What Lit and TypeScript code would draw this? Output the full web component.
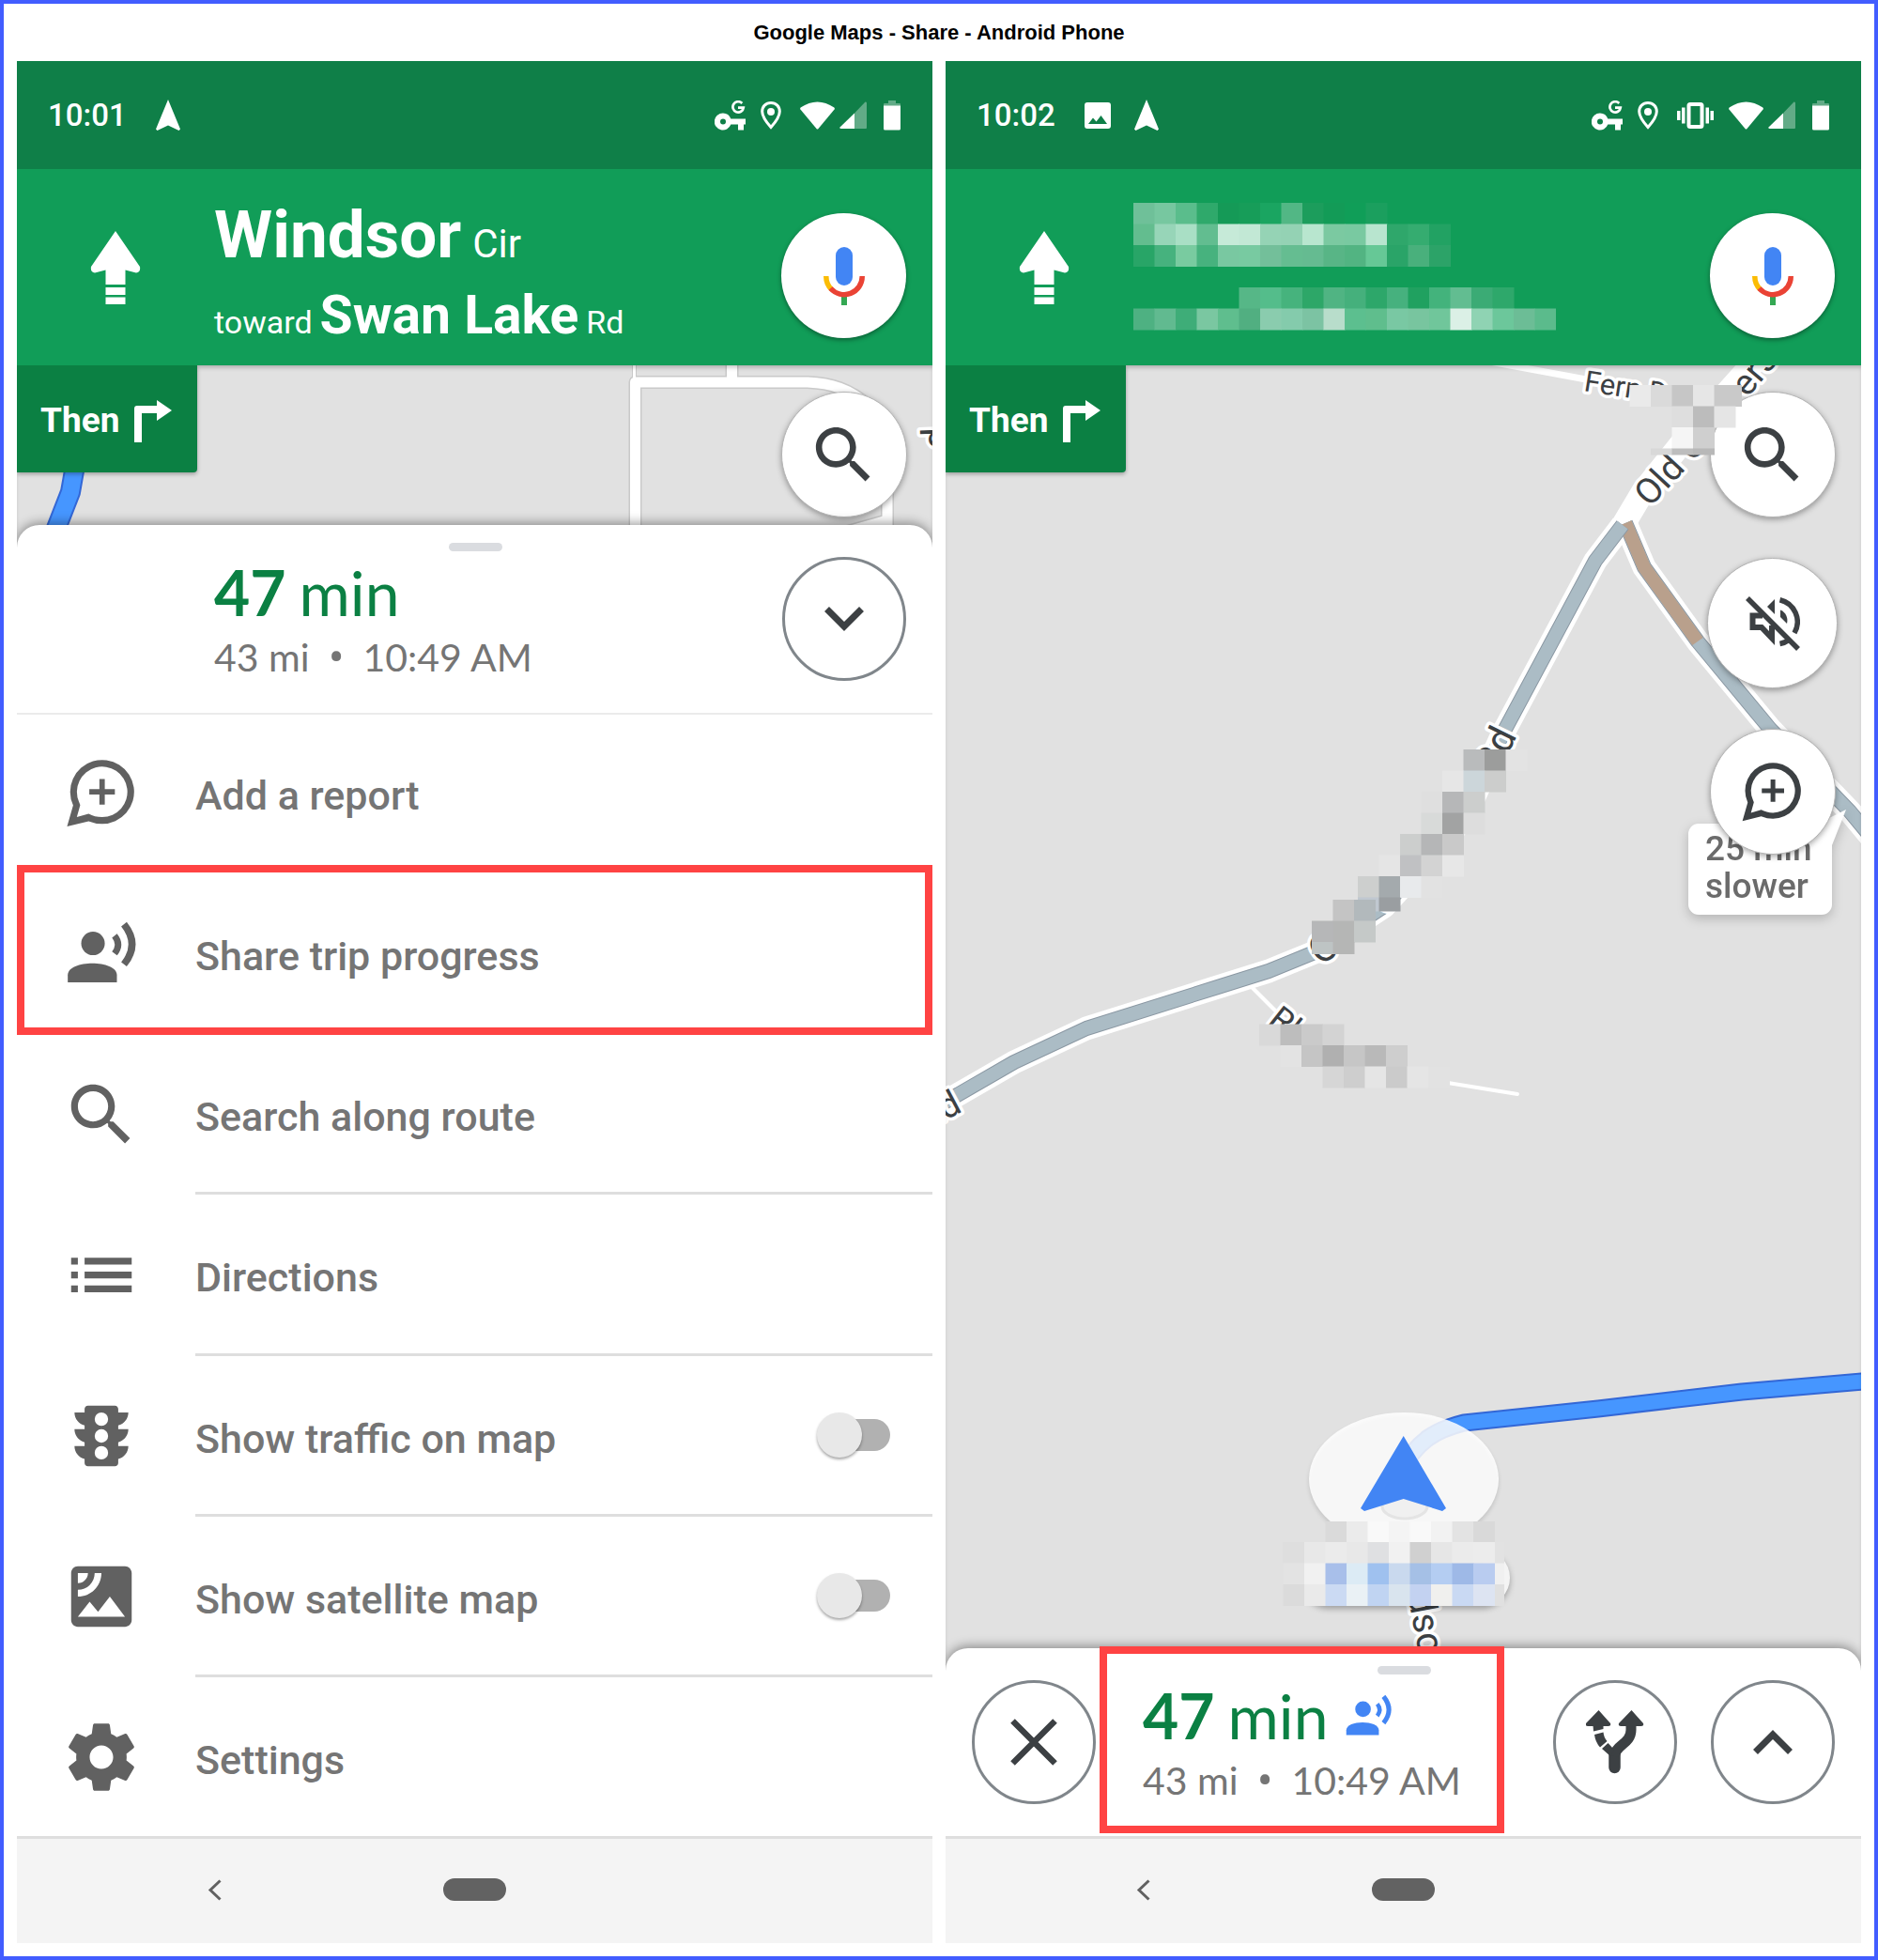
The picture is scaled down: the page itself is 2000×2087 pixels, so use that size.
import { LitElement, html, css, svg, nothing } from "lit";
import { customElement, property } from "lit/decorators.js";

/* ---------- icons ---------- */

const shareShape = svg`
  <circle cx="9.5" cy="8.8" r="3.5"></circle>
  <path d="M2 20.4V18.2C2 15.9 5.6 14.7 9.3 14.7S16.6 15.9 16.6 18.2V20.4Z"></path>
  <path d="M15.9 6.5Q18 9.1 15.9 11.8" fill="none" stroke="currentColor" stroke-width="1.9"></path>
  <path d="M18.7 3.1Q23.5 9.1 18.7 15" fill="none" stroke="currentColor" stroke-width="2.1"></path>`;

const reportShape = svg`<g transform="translate(0 -.5)">
  <path fill-rule="evenodd" d="M1.8 22.3L3.6 16A9.5 9.5 0 1 1 12.2 21.5Q10.2 21.5 8.2 20.7ZM4.7 19.5L8.2 18.5Q10 19.5 12.2 19.5A7.5 7.5 0 1 0 5.3 14.9L5.7 15.9Z"></path>
  <path d="M11.4 8.2h1.6v3h3v1.6h-3v3h-1.6v-3h-3v-1.6h3z"></path></g>`;

const searchShape = svg`<path d="M15.5 14h-.79l-.28-.27C15.41 12.59 16 11.11 16 9.5 16 5.91 13.09 3 9.5 3S3 5.91 3 9.5 5.91 16 9.5 16c1.61 0 3.09-.59 4.23-1.57l.27.28v.79l5 4.99L20.49 19l-4.99-5zm-6 0C7.01 14 5 11.99 5 9.5S7.01 5 9.5 5 14 7.01 14 9.5 11.99 14 9.5 14z"></path>`;

const listShape = svg`<path d="M3 6.8h2v2H3zM3 10.9h2v2H3zM3 15h2v2H3zM7 6.8h14v2H7zM7 10.9h14v2H7zM7 15h14v2H7z"></path>`;

const trafficShape = svg`<path fill-rule="evenodd" d="M20 10h-3V8.86c1.72-.45 3-2 3-3.86h-3V4c0-.55-.45-1-1-1H8c-.55 0-1 .45-1 1v1H4c0 1.86 1.28 3.41 3 3.86V10H4c0 1.86 1.28 3.41 3 3.86V15H4c0 1.86 1.28 3.41 3 3.86V20c0 .55.45 1 1 1h8c.55 0 1-.45 1-1v-1.14c1.72-.45 3-2 3-3.86h-3v-1.14c1.72-.45 3-2 3-3.86zM12 19a2 2 0 1 1 0-4 2 2 0 0 1 0 4zm0-5a2 2 0 1 1 0-4 2 2 0 0 1 0 4zm0-5a2 2 0 1 1 0-4 2 2 0 0 1 0 4z"></path>`;

const satelliteShape = svg`<path d="M19 3H5c-1.1 0-2 .9-2 2v14c0 1.1.9 2 2 2h14c1.1 0 2-.9 2-2V5c0-1.1-.9-2-2-2zM5 4.99h3C8 6.65 6.66 8 5 8V4.99zM5 12v-2c2.76 0 5-2.25 5-5.01h2C12 8.86 8.87 12 5 12zm0 6l3.5-4.5 2.5 3.01L14.5 12l4.5 6H5z"></path>`;

const gearShape = svg`<path d="M19.43 12.98c.04-.32.07-.64.07-.98s-.03-.66-.07-.98l2.11-1.65c.19-.15.24-.42.12-.64l-2-3.46c-.12-.22-.39-.3-.61-.22l-2.49 1c-.52-.4-1.08-.73-1.69-.98l-.38-2.65C14.46 2.18 14.25 2 14 2h-4c-.25 0-.46.18-.49.42l-.38 2.65c-.61.25-1.17.59-1.69.98l-2.49-1c-.23-.09-.49 0-.61.22l-2 3.46c-.13.22-.07.49.12.64l2.11 1.65c-.04.32-.07.65-.07.98s.03.66.07.98l-2.11 1.65c-.19.15-.24.42-.12.64l2 3.46c.12.22.39.3.61.22l2.49-1c.52.4 1.08.73 1.69.98l.38 2.65c.03.24.24.42.49.42h4c.25 0 .46-.18.49-.42l.38-2.65c.61-.25 1.17-.59 1.69-.98l2.49 1c.23.09.49 0 .61-.22l2-3.46c.12-.22.07-.49-.12-.64l-2.11-1.65zM12 15.5c-1.93 0-3.5-1.57-3.5-3.5s1.57-3.5 3.5-3.5 3.5 1.57 3.5 3.5-1.57 3.5-3.5 3.5z"></path>`;

const icon24 = (shape: unknown, cls: string) =>
  html`<svg class=${cls} viewBox="0 0 24 24" fill="currentColor" aria-hidden="true">${shape}</svg>`;

const micIcon = html`<svg class="mic" viewBox="0 0 44 62" aria-hidden="true">
  <rect x="13" y="0" width="18" height="41" rx="9" fill="#4285f4"></rect>
  <rect x="19" y="50" width="6" height="12" fill="#34a853"></rect>
  <path d="M2.8 31A19.2 19.2 0 0 0 8.5 45" fill="none" stroke="#fbbc05" stroke-width="5.5"></path>
  <path d="M7.5 44A19.2 19.2 0 0 0 41.2 31" fill="none" stroke="#ea4335" stroke-width="5.5"></path>
</svg>`;

const muteIcon = html`<svg class="mute" viewBox="0 0 58 60" fill="currentColor" aria-hidden="true">
  <path d="M18 21.5H7.5V34H17L28 45.5V32" fill="none" stroke="currentColor" stroke-width="6"></path>
  <path d="M23 12L31 4V20Z"></path>
  <path d="M36.5 4.7A24 24 0 0 1 52 40" fill="none" stroke="currentColor" stroke-width="5.5"></path>
  <path d="M37 15.5C43 18 45.5 24 44 30L37 23Z"></path>
  <path d="M36.5 51.5Q42 50.5 46 47.5" fill="none" stroke="currentColor" stroke-width="5.5"></path>
  <path d="M2 3L56 57" stroke="currentColor" stroke-width="5.5"></path>
</svg>`;

const straightIcon = html`<svg class="straight" viewBox="0 0 54 78" fill="#fff" aria-hidden="true">
  <path d="M27 0L53 38Q54 44 49 44.5L37.5 41.5V57H16.5V41.5L5 44.5Q0 44 1 38Z"></path>
  <path d="M16.5 60h21v8h-21zM16.5 70.5h21v7.5h-21z"></path>
</svg>`;

const turnIcon = html`<svg class="turn" viewBox="0 0 40 45" fill="#fff" aria-hidden="true">
  <path d="M0 45V9Q0 6 3 6H24V0L40 11L24 22V14H8V45Z"></path>
</svg>`;

const navArrow = html`<svg class="s-nav" viewBox="0 0 26 33" fill="#fff" aria-hidden="true">
  <path d="M13 0L26 31.5L24.5 33L13 27.5L1.5 33L0 31.5Z"></path>
</svg>`;

const photoIcon = html`<svg class="s-photo" viewBox="0 0 28 28" aria-hidden="true">
  <path fill="#fff" fill-rule="evenodd" d="M3 0H25Q28 0 28 3V25Q28 28 25 28H3Q0 28 0 25V3Q0 0 3 0ZM4 23H24L17.5 14L12.5 20.5L9 16.5Z"></path>
</svg>`;

const keyIcon = html`<svg class="s-key" viewBox="0 0 33 32" aria-hidden="true">
  <path fill="#fff" fill-rule="evenodd" d="M9 13.5A9 9 0 0 1 17.3 19.5H33V25.5H31V31.5H25V25.5H17.3A9 9 0 1 1 9 13.5ZM9 19.5A3 3 0 1 0 9 25.5A3 3 0 0 0 9 19.5Z"></path>
  <path fill="none" stroke="#fff" stroke-width="2.7" d="M29.3 3A5.7 5.7 0 1 0 30.8 7.6H25"></path>
</svg>`;

const pinIcon = html`<svg class="s-pin" viewBox="0 0 22 30" aria-hidden="true">
  <path fill="none" stroke="#fff" stroke-width="3" d="M11 1.5C5.5 1.5 1.7 5.5 1.7 10.7C1.7 17 11 27.5 11 27.5S20.3 17 20.3 10.7C20.3 5.5 16.5 1.5 11 1.5Z"></path>
  <circle cx="11" cy="11" r="4" fill="#fff"></circle>
</svg>`;

const vibrateIcon = html`<svg class="s-vib" viewBox="0 0 39 28" aria-hidden="true">
  <rect x="12.5" y="2" width="14" height="24" rx="1.5" fill="none" stroke="#fff" stroke-width="4"></rect>
  <path fill="#fff" d="M0 9h3.5v10H0zM5 5.5h3.5v17H5zM30.5 5.5H34v17h-3.5zM35.5 9H39v10h-3.5z"></path>
</svg>`;

const wifiIcon = html`<svg class="s-wifi" viewBox="0 0 37 30" fill="#fff" aria-hidden="true">
  <path d="M.6 6.5Q18.5-5.5 36.4 6.5L37 8L19.5 29Q18.5 30 17.5 29L0 8Z"></path>
</svg>`;

const signalIcon = html`<svg class="s-signal" viewBox="0 0 29 29" fill="#fff" aria-hidden="true">
  <path opacity=".35" d="M16 12.5L27.5 .5Q29 0 29 2V28Q29 29 28 29H16Z"></path>
  <path d="M16 12.5V29H1.5Q-.5 28.5 .5 27.5Z"></path>
</svg>`;

const batteryIcon = html`<svg class="s-batt" viewBox="0 0 18 32" fill="#fff" aria-hidden="true">
  <path opacity=".35" d="M5 0h8v3h4q1 0 1 1v2H0V4q0-1 1-1h4z"></path>
  <path d="M0 5.5H18V30Q18 31.5 16.5 31.5H1.5Q0 31.5 0 30Z"></path>
</svg>`;

const chevron = (up: boolean) => html`<svg class="chev" viewBox="0 0 42 26" aria-hidden="true">
  <path fill="none" stroke="currentColor" stroke-width="7" d=${up ? "M2.5 23.5L21 5L39.5 23.5" : "M2.5 2.5L21 21L39.5 2.5"}></path>
</svg>`;

const closeIcon = html`<svg class="close" viewBox="0 0 50 50" aria-hidden="true">
  <path fill="none" stroke="currentColor" stroke-width="6.5" d="M2.5 2.5L47.5 47.5M47.5 2.5L2.5 47.5"></path>
</svg>`;

const forkIcon = html`<svg class="fork" viewBox="0 0 62 68" fill="currentColor" aria-hidden="true">
  <path d="M13.5 0L26 14Q27 17 24 17H2Q-1 17 0 14ZM48.5 0L61 14Q62 17 59 17H37Q34 17 35 14Z"></path>
  <path d="M7.5 16H18.5V20L8 22.5Z"></path>
  <path d="M9 26L18.5 23.5Q19 29 22.5 33L15 39.5Q10 34 9 26Z"></path>
  <path fill="none" stroke="currentColor" stroke-width="12.5" stroke-linecap="round" d="M30.5 61V47"></path>
  <path fill="none" stroke="currentColor" stroke-width="11" d="M48 16V21C48 36 31 37 30.5 49"></path>
  <path d="M17 41L23.5 35L30 42L26 49Z"></path>
</svg>`;

/* ---------- pixelated blocks ---------- */

interface Block { x: number; y: number; h?: number; colors: (string | null)[]; }
const CELL = 22.5;

const mosaic = (blocks: Block[]) =>
  blocks.map((b) => b.colors.map((c, i) => c
    ? svg`<rect x=${b.x + i * CELL} y=${b.y} width=${CELL + 0.5} height=${b.h ?? CELL + 0.5} fill=${c}></rect>`
    : nothing));

const mapBlocks: Block[] = [
  { x: 1832, y: 410, colors: ["#c9c9c9"] },
  { x: 1735.5, y: 410, colors: ["#eaeaea", "#dadada", "#c6c6c6", "#e6e6e6", "#c9c9c9"] },
  { x: 1735.5, y: 432.5, colors: [null, null, "#dedede", "#bcbcbc", "#e5e5e5"] },
  { x: 1735.5, y: 455, colors: [null, null, "#f5f5f5", "#cfcfcf"] },
  { x: 1735.5, y: 477.5, h: 7, colors: [null, "#d8d8d8", "#bdbdbd", "#b8b8b8"] },

  { x: 1558.5, y: 798, colors: ["#b9bbbc", "#9c9d9c", "#e3e3e3"] },
  { x: 1536, y: 820.5, colors: ["#e6e6e6", "#ccd6da", "#cccdcc"] },
  { x: 1513.5, y: 843, colors: ["#dfdfdf", "#b6b7b8", "#cccecd"] },
  { x: 1513.5, y: 865.5, colors: ["#d8dad9", "#a2a3a3", "#dddddd"] },
  { x: 1491, y: 888, colors: ["#cccecd", "#b5b6b7", "#c9c9c9"] },
  { x: 1468.5, y: 910.5, colors: ["#e5e5e5", "#c0c1c3", "#d3d3d3", "#e7e7e7"] },
  { x: 1446, y: 933, colors: ["#cdcfce", "#a4aaad", "#e8eaec", "#e2e2e2"] },
  { x: 1446, y: 955.5, h: 15, colors: ["#c0c8d0", "#9a9ea1"] },
  { x: 1397, y: 958, colors: ["#e1e1e1", "#c4c4c4", "#b2b9bc"] },
  { x: 1397, y: 980.5, colors: ["#b6b7b8", "#b5b6b5", "#c5c9c8"] },
  { x: 1397, y: 1003, h: 13, colors: ["#bec4c4", "#b5b6b5"] },

  { x: 1341, y: 1090.5, colors: ["#d9d9d9", "#bdbdbd", "#cacaca", "#d3d3d3"] },
  { x: 1363.5, y: 1113, colors: ["#e3e3e3", "#c5c5c5", "#b0b0b0", "#c6c6c6", "#b9b9b9", "#cecece"] },
  { x: 1408.5, y: 1135.5, colors: ["#d6d6d6", "#cecece", "#e5e5e5", "#cbcbcb", "#e5e5e5", "#e2e2e2"] },

  { x: 1411.5, y: 1620, colors: ["#dadada", "#ebebeb", "#f9f9f9", "#f4f4f4", "#f9f9f9", "#f2f2f2", "#e3e3e3", "#d9d9d9"] },
  { x: 1579, y: 1642, colors: ["#e2e2e2"] },
  { x: 1366.5, y: 1642, colors: ["#dedede", "#e8e8e8", "#ebebeb", "#e8e8e8", "#dfe0e2", "#f1f1f1", "#d0d0d0", "#e6e6e6", "#ebebeb", "#ececec"] },
  { x: 1579, y: 1664.5, colors: ["#f0f0f0"] },
  { x: 1366.5, y: 1664.5, colors: ["#e3e3e3", "#f1f1f1", "#a8bfea", "#dcebf5", "#9fc1ef", "#c9d9ee", "#a5c0e6", "#b4cdf2", "#9eb9e7", "#b9ccf0"] },
  { x: 1579, y: 1687, colors: ["#e0e0e0"] },
  { x: 1366.5, y: 1687, colors: ["#dbdbdb", "#eaeaea", "#cbdaf3", "#eaf1f5", "#c0d4f2", "#d9e4ee", "#c3d2f1", "#f0f0ee", "#c9d9f3", "#dde4f2"] },
];

const streetBlocks: Block[] = [
  { x: 0, y: 0, colors: ["#6fc099", "#77c7a0", "#5abd8c", "#2fa96b", "#159a57", "#179d59", "#1aa561", "#52b785", "#1c9d5c", "#139b57", "#109e58", "#1b9f5e"] },
  { x: 0, y: 22.5, colors: ["#63bd8f", "#97d5b8", "#a9dfc5", "#62bd90", "#c6ead8", "#c2e8d5", "#95d3b5", "#94d2b4", "#b8e6cf", "#7bc9a1", "#79c9a1", "#b8e5cf", "#2fa76b", "#35ac70", "#22a263"] },
  { x: 0, y: 45, colors: ["#28a567", "#46b27e", "#79cba0", "#47b27e", "#79c8a1", "#78caa1", "#73bf9a", "#65bd91", "#65bb91", "#58b586", "#52b482", "#66c896", "#2aa468", "#49b07c", "#2ca368"] },
  { x: 112.5, y: 90, colors: ["#56b787", "#54bd8b", "#46b37d", "#2da768", "#50b483", "#45b07c", "#2da76a", "#46b17e", "#20a160", "#43b37c", "#62bd91", "#3bab75", "#2ea86b"] },
  { x: 0, y: 112.5, colors: ["#4eb182", "#61ba90", "#3ead78", "#7ac7a1", "#5fbe8e", "#51af81", "#8accae", "#84cbac", "#7cc3a3", "#b8ddcb", "#5cbf8f", "#5fbe8d", "#79c8a3", "#78c59f", "#70c69b", "#dbf0e6", "#8fd3b3", "#6cc79b", "#6cbd96", "#5bbb8c"] },
];

/* ---------- maps ---------- */

const mapOverview = html`<svg class="canvas" viewBox="18 389 975 194" preserveAspectRatio="xMaxYMin slice" aria-hidden="true">
  <g fill="none" stroke-linejoin="round">
    <g stroke="#c9c9c9">
      <path stroke-width="14" d="M676.5 600V407H860C885 408 905 414 925 432M779.5 380V404M945 520V600"></path>
      <path stroke-width="5" d="M675.5 380V404"></path>
      <path stroke-width="16" d="M885 572L945 555"></path>
    </g>
    <g stroke="#fff">
      <path stroke-width="11" d="M676.5 600V407H860C885 408 905 414 925 432M779.5 380V404M945 520V600"></path>
      <path stroke-width="3" d="M675.5 380V404"></path>
      <path stroke-width="13" d="M885 572L945 555"></path>
    </g>
    <path stroke="#3367d6" stroke-width="22" d="M81 490L75 524L52 583"></path>
    <path stroke="#4696ff" stroke-width="18" d="M81 490L75 524L52 583"></path>
  </g>
  <text class="street" x="1012" y="478" font-size="42" transform="rotate(-92 1012 478)">d</text>
</svg>`;

const mainRoad = "M1728 559L1699 597L1601 780L1560 870L1474 965L1400 1014L1351 1034L1300 1050L1157 1095L1080 1131L995 1180";
const sideRoad = "M1731 557L1751 604L1808 683L1885 776L1970 864L1995 894";
const blueRoute = "M1490 1570Q1502 1545 1521 1531Q1535 1521 1559 1515L1702 1500L1855 1482L1995 1470";

const mapRoute = html`<svg class="canvas" viewBox="1007 389 975 1390" preserveAspectRatio="xMidYMin slice" aria-hidden="true">
  <g fill="none" stroke-linejoin="round" stroke-linecap="butt">
    <path stroke="#fff" stroke-width="7" d="M1570 382L1700 406L1760 420"></path>
    <path stroke="#fff" stroke-width="25" d="M1728 560L1750 523L1790 473L1858 397L1875 378"></path>
    <path stroke="#fff" stroke-width="4" d="M1333 1051L1366 1084"></path>
    <path stroke="#fff" stroke-width="4" stroke-linecap="round" d="M1542 1153L1616 1165"></path>
    <g stroke="#fff" stroke-width="25"><path d=${mainRoad}></path><path d=${sideRoad}></path></g>
    <g stroke="#8b98a3" stroke-width="16"><path d=${sideRoad}></path></g>
    <path stroke="#abbcc5" stroke-width="14" d=${sideRoad}></path>
    <path stroke="#b9a08c" stroke-width="14" d="M1731 557L1751 604L1808 683"></path>
    <path stroke="#8b98a3" stroke-width="16" d=${mainRoad}></path>
    <path stroke="#abbcc5" stroke-width="14" d=${mainRoad}></path>
    <path stroke="#3367d6" stroke-width="19" d=${blueRoute}></path>
    <path stroke="#4696ff" stroke-width="15" d=${blueRoute}></path>
  </g>
  <g class="street">
    <text x="1686" y="416" font-size="31" transform="rotate(9 1686 416)">Fern D</text>
    <text x="1757" y="541" font-size="38" transform="rotate(-47 1757 541)">Old C</text>
    <text x="1861" y="424" font-size="38" transform="rotate(-50 1861 424)">ers</text>
    <text x="1616" y="783" font-size="42" text-anchor="end" transform="rotate(-64 1616 783)">Rd</text>
    <text x="1026" y="1183" font-size="38" text-anchor="end" transform="rotate(-28 1026 1183)">Rd</text>
    <text x="1406" y="1029" font-size="42" transform="rotate(-35 1406 1029)">O</text>
    <text x="1475" y="974" font-size="38" transform="rotate(-40 1475 974)">o</text>
    <text x="1349" y="1089" font-size="36" transform="rotate(38 1349 1089)">Rh</text>
    <text x="1499" y="1698" font-size="40" transform="rotate(79 1499 1698)">dsor</text>
  </g>
  <g class="callout">
    <path d="M1930 880L1966 862L1951 900Z"></path>
    <rect x="1798" y="877" width="153" height="97" rx="11"></rect>
    <text x="1816" y="916">25 min</text>
    <text x="1816" y="956">slower</text>
  </g>
  <rect class="pill" x="1385" y="1650" width="223" height="60" rx="30"></rect>
  <ellipse class="disc" cx="1495" cy="1575" rx="101" ry="71"></ellipse>
  <ellipse cx="1496" cy="1604" rx="24" ry="13" fill="#f0f0f0" stroke="#e4e4e4" stroke-width="3"></ellipse>
  <path fill="#4285f4" d="M1494.7 1529L1540 1606L1536 1609L1494.7 1596L1453 1609L1449 1606Z"></path>
</svg>`;

/* ---------- shared styles ---------- */

const base = css`
  * { box-sizing: border-box; }
  button { font: inherit; color: inherit; border: 0; margin: 0; padding: 0; background: none; cursor: pointer; }
  svg { display: block; flex: none; }
`;

/* ---------- status bar ---------- */

@customElement("status-bar")
class StatusBar extends LitElement {
  @property() time = "";
  @property({ type: Boolean }) silent = false;

  static styles = [base, css`
    :host { display: block; background: #0f7f48; }
    .bar { display: flex; align-items: center; height: 115px; padding: 0 34px 0 33px; color: #fff; }
    .time { font: 500 33px/40px Roboto, sans-serif; margin-right: 31px; }
    .right { display: flex; align-items: center; margin-left: auto; }
    .s-nav { width: 26px; height: 33px; }
    .s-photo { width: 28px; height: 28px; margin-right: 25px; }
    .s-key { width: 33px; height: 32px; margin-right: 16px; }
    .s-pin { width: 22px; height: 30px; margin-right: 20px; }
    .s-vib { width: 39px; height: 28px; margin-right: 16px; }
    .s-wifi { width: 37px; height: 30px; margin-right: 5px; }
    .s-signal { width: 29px; height: 29px; margin-right: 18px; }
    .s-batt { width: 18px; height: 32px; }
  `];

  render() {
    return html`<div class="bar">
      <span class="time">${this.time}</span>
      ${this.silent ? photoIcon : nothing}${navArrow}
      <div class="right">
        ${keyIcon}${pinIcon}${this.silent ? vibrateIcon : nothing}${wifiIcon}${signalIcon}${batteryIcon}
      </div>
    </div>`;
  }
}

/* ---------- direction header ---------- */

@customElement("direction-header")
class DirectionHeader extends LitElement {
  @property({ type: Boolean }) masked = false;

  static styles = [base, css`
    :host { display: block; background: #119d58; color: #fff; font-family: Roboto, sans-serif; }
    .head { display: grid; grid-template-columns: 210px 1fr auto; align-items: center; height: 209px; padding-right: 28px; }
    .straight { width: 54px; height: 78px; margin-left: 78px; }
    .streets { display: flex; flex-direction: column; padding-top: 16px; }
    .line { display: flex; align-items: baseline; margin: 0; white-space: nowrap; font-weight: 400; }
    .first { gap: 12px; line-height: 84px; font-size: 42px; }
    .first b { font-size: 71px; }
    .second { gap: 8px; line-height: 68px; font-size: 34px; }
    .second b { font-size: 57px; }
    .blocks { width: 450px; height: 136px; margin: -2px 0 0 -10px; }
    .voice { display: grid; place-items: center; width: 133px; height: 133px; margin-top: 18px; border-radius: 50%; background: #fff; box-shadow: 0 2px 5px rgba(0, 0, 0, .4); }
    .mic { width: 44px; height: 62px; }
  `];

  render() {
    return html`<div class="head">
      ${straightIcon}
      ${this.masked
        ? html`<svg class="blocks" viewBox="0 0 450 136" aria-hidden="true">${mosaic(streetBlocks)}</svg>`
        : html`<div class="streets">
            <h2 class="line first"><b>Windsor</b><span>Cir</span></h2>
            <p class="line second"><span>toward</span><b>Swan Lake</b><span>Rd</span></p>
          </div>`}
      <button class="voice" aria-label="Voice">${micIcon}</button>
    </div>`;
  }
}

/* ---------- map ---------- */

@customElement("nav-map")
class NavMap extends LitElement {
  @property({ type: Boolean }) full = false;

  static styles = [base, css`
    :host { display: block; position: relative; overflow: hidden; background: #e1e1e1; font-family: Roboto, sans-serif; }
    .canvas { position: absolute; inset: 0; width: 100%; height: 100%; }
    .edge { position: absolute; inset: 0; pointer-events: none; box-shadow: inset 0 4px 5px -2px rgba(0, 0, 0, .25); }
    .then { position: relative; display: inline-flex; align-items: center; gap: 16px; height: 114px; width: 192px; padding: 4px 0 0 25px;
      background: #0b8043; color: #fff; font: 700 37px/44px Roboto, sans-serif; border-radius: 0 0 4px 0; box-shadow: 0 2px 4px rgba(0, 0, 0, .3); }
    .turn { width: 40px; height: 45px; }
    .actions { position: absolute; top: 28px; right: 25px; display: flex; flex-direction: column; align-items: center; gap: 43px; width: 139px; }
    .fab { display: grid; place-items: center; width: 134px; height: 134px; border-radius: 50%; background: #fff; color: #3c4043;
      border: 1px solid #b4b4b4; box-shadow: 0 2px 6px rgba(0, 0, 0, .35); }
    .wide { width: 139px; height: 139px; }
    .glyph { width: 79px; height: 79px; }
    .report { width: 75px; height: 75px; }
    .mute { width: 58px; height: 60px; }
    .street { fill: #3c4043; stroke: #fff; stroke-width: 7px; stroke-linejoin: round; paint-order: stroke; }
    .callout { fill: #fff; filter: drop-shadow(0 4px 6px rgba(0, 0, 0, .2)); }
    .callout text { fill: #6b6b6b; font-size: 37px; font-weight: 500; }
    .pill { fill: #f4f4f4; filter: drop-shadow(0 3px 3px rgba(0, 0, 0, .3)); }
    .disc { fill: #fff; fill-opacity: .85; filter: drop-shadow(0 3px 2px rgba(0, 0, 0, .15)); }
    .cover { pointer-events: none; }
  `];

  render() {
    return html`
      ${this.full ? mapRoute : mapOverview}
      <div class="edge"></div>
      <div class="then"><span>Then</span>${turnIcon}</div>
      <div class="actions">
        <button class="fab" aria-label="Search">${icon24(searchShape, "glyph")}</button>
        ${this.full ? html`
          <button class="fab wide" aria-label="Unmute">${muteIcon}</button>
          <button class="fab" aria-label="Add a report">${icon24(reportShape, "report")}</button>` : nothing}
      </div>
      ${this.full
        ? html`<svg class="canvas cover" viewBox="1007 389 975 1390" preserveAspectRatio="xMidYMin slice" aria-hidden="true">${mosaic(mapBlocks)}</svg>`
        : nothing}`;
  }
}

/* ---------- trip summary ---------- */

@customElement("trip-summary")
class TripSummary extends LitElement {
  @property({ type: Boolean }) compact = false;

  static styles = [base, css`
    :host { display: block; position: relative; margin-top: -24px; background: #fff; border-radius: 24px 24px 0 0; box-shadow: 0 -2px 12px rgba(0, 0, 0, .4); }
    .handle { position: absolute; top: 19px; left: calc(50% - 28px); width: 57px; height: 9px; border-radius: 5px; background: #dadce0; }
    .row { display: grid; grid-template-columns: 210px auto 1fr; align-items: center; height: 200px; padding-right: 28px; color: #3c4043; }
    .lead { padding-left: 28px; }
    .trip { position: relative; height: 200px; padding-top: 32px; font-family: Lato, sans-serif; white-space: nowrap; }
    .marked::after { content: ""; position: absolute; inset: -2px -46px 3px -46px; border: 8px solid #ff4343; pointer-events: none; }
    .time { display: flex; align-items: center; gap: 14px; margin: 0; font-size: 66px; line-height: 80px; font-weight: 400; color: #0b8043; }
    .info { display: flex; align-items: center; gap: 20px; margin: 0; font-size: 41px; line-height: 58px; color: #757575; }
    .dot { font: 50px/58px Roboto, sans-serif; }
    .sharing { width: 57px; height: 57px; color: #4285f4; }
    .tail { display: flex; justify-content: flex-end; gap: 36px; }
    .round { display: grid; place-items: center; width: 132px; height: 132px; border: 3px solid #80868b; border-radius: 50%; background: #fff; }
    .chev { width: 42px; height: 26px; }
    .close { width: 50px; height: 50px; }
    .fork { width: 62px; height: 68px; }
  `];

  render() {
    return html`<div class="row">
      <div class="lead">${this.compact ? html`<button class="round" aria-label="Exit navigation">${closeIcon}</button>` : nothing}</div>
      <div class="trip ${this.compact ? "marked" : ""}">
        <p class="time"><b>47</b><span>min</span>${this.compact ? icon24(shareShape, "sharing") : nothing}</p>
        <p class="info"><span>43 mi</span><span class="dot">•</span><span>10:49 AM</span></p>
      </div>
      <div class="tail">
        ${this.compact ? html`<button class="round" aria-label="Alternate routes">${forkIcon}</button>` : nothing}
        <button class="round" aria-label=${this.compact ? "Expand" : "Collapse"}>${chevron(this.compact)}</button>
      </div>
    </div>
    <div class="handle"></div>`;
  }
}

/* ---------- menu ---------- */

interface MenuItem { label: string; shape: unknown; toggle?: boolean; marked?: boolean; ruled?: boolean; }

const items: MenuItem[] = [
  { label: "Add a report", shape: reportShape },
  { label: "Share trip progress", shape: shareShape, marked: true },
  { label: "Search along route", shape: searchShape, ruled: true },
  { label: "Directions", shape: listShape, ruled: true },
  { label: "Show traffic on map", shape: trafficShape, toggle: true, ruled: true },
  { label: "Show satellite map", shape: satelliteShape, toggle: true, ruled: true },
  { label: "Settings", shape: gearShape },
];

@customElement("trip-menu")
class TripMenu extends LitElement {
  static styles = [base, css`
    :host { display: flex; position: relative; background: #fff; border-top: 2px solid #ebebeb; }
    .menu { display: flex; flex: 1; flex-direction: column; list-style: none; margin: -2px 0; padding: 0; }
    .item { display: flex; flex: 1; position: relative; min-height: 120px; }
    .marked::after { content: ""; position: absolute; inset: -9px 0 -1px; border: 8px solid #ff4343; pointer-events: none; }
    .entry { display: grid; grid-template-columns: 190px 1fr; align-items: center; width: 100%; color: #616161; text-align: left; cursor: pointer; }
    .glyph { width: 86px; height: 86px; margin-left: 47px; }
    .body { display: flex; align-items: center; justify-content: space-between; height: 100%; padding-right: 45px; border-bottom: 3px solid transparent; }
    .ruled { border-bottom-color: #dedede; }
    .label { padding-top: 8px; font: 500 43px/50px Roboto, sans-serif; color: #757575; }
    .switch { appearance: none; position: relative; width: 78px; height: 50px; margin: 0; cursor: pointer; }
    .switch::before { content: ""; position: absolute; inset: 8px 0 8px 10px; border-radius: 17px; background: #b1b1b1; }
    .switch::after { content: ""; position: absolute; left: 0; top: 1px; width: 48px; height: 48px; border-radius: 50%; background: #e8e8e8; box-shadow: 0 2px 3px rgba(0, 0, 0, .35); }
    .switch:checked::after { left: 30px; }
  `];

  render() {
    return html`<ul class="menu">${items.map((it) => {
      const inner = html`${icon24(it.shape, "glyph")}
        <span class="body ${it.ruled ? "ruled" : ""}">
          <span class="label">${it.label}</span>
          ${it.toggle ? html`<input class="switch" type="checkbox" role="switch">` : nothing}
        </span>`;
      return html`<li class="item ${it.marked ? "marked" : ""}">
        ${it.toggle ? html`<label class="entry">${inner}</label>` : html`<button class="entry">${inner}</button>`}
      </li>`;
    })}</ul>`;
  }
}

/* ---------- system navigation ---------- */

@customElement("system-nav")
class SystemNav extends LitElement {
  static styles = [base, css`
    :host { display: block; position: relative; background: #f4f4f4; border-top: 3px solid #dedede; }
    .bar { display: grid; grid-template-columns: 1fr auto 1fr; align-items: center; height: 111px; padding-bottom: 3px; }
    .back { justify-self: end; margin-right: 236px; }
    .arrow { width: 15px; height: 23px; }
    .home { width: 67px; height: 24px; border-radius: 12px; background: #626262; }
  `];

  render() {
    return html`<div class="bar">
      <button class="back" aria-label="Back"><svg class="arrow" viewBox="0 0 15 23" aria-hidden="true">
        <path fill="none" stroke="#616161" stroke-width="3" d="M13.5 1.5L3 11.5L13.5 21.5"></path></svg></button>
      <button class="home" aria-label="Home"></button>
    </div>`;
  }
}

/* ---------- page ---------- */

@customElement("app-root")
class AppRoot extends LitElement {
  static styles = [base, css`
    :host { display: block; }
    .page { display: flex; flex-direction: column; min-height: 100vh; padding: 0 14px 14px; border: 4px solid #425dff; background: #fff; }
    .title { margin: 0; text-align: center; font: bold 22px/61px "Liberation Sans", Arial, sans-serif; color: #000; }
    .phones { display: grid; flex: 1; grid-template-columns: 1fr 1fr; gap: 14px; }
    .phone { display: flex; flex-direction: column; min-width: 0; overflow: hidden; }
    .strip { height: 194px; }
    .grow { flex: 1; min-height: 194px; }
  `];

  render() {
    return html`<main class="page">
      <h1 class="title">Google Maps - Share - Android Phone</h1>
      <div class="phones">
        <section class="phone">
          <status-bar time="10:01"></status-bar>
          <direction-header></direction-header>
          <nav-map class="strip"></nav-map>
          <trip-summary></trip-summary>
          <trip-menu class="grow"></trip-menu>
          <system-nav></system-nav>
        </section>
        <section class="phone">
          <status-bar time="10:02" silent></status-bar>
          <direction-header masked></direction-header>
          <nav-map class="grow" full></nav-map>
          <trip-summary compact></trip-summary>
          <system-nav></system-nav>
        </section>
      </div>
    </main>`;
  }
}
